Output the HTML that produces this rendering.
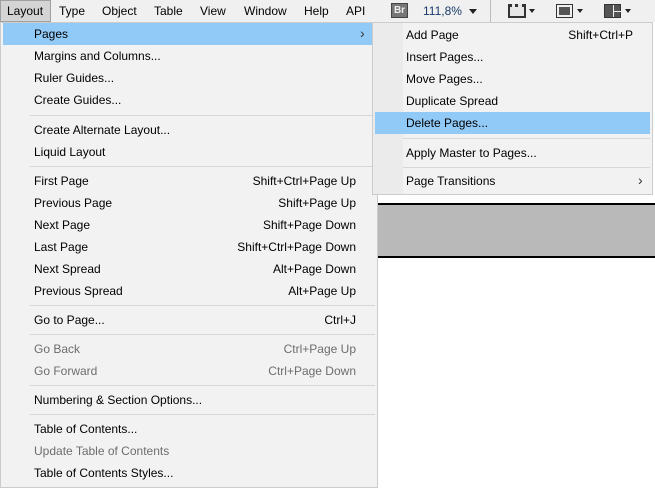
<!DOCTYPE html>
<html><head><meta charset="utf-8"><style>
*{margin:0;padding:0;box-sizing:border-box}
body{width:655px;height:490px;background:#fff;position:relative;overflow:hidden;font-family:"Liberation Sans",sans-serif;font-size:12px;color:#000}
.bar{position:absolute;left:0;top:0;width:655px;height:22px;background:#f0f0f0}
.bar span{position:absolute;top:4px}
.lay{position:absolute;left:0;top:0;width:51px;height:22px;background:#d4d4d4;border:1px solid #a0a0a0}
.band{position:absolute;left:377px;top:203px;width:278px;height:55px;background:#b9b9b9;border-top:2px solid #000;border-bottom:2px solid #000}
.menu{position:absolute;background:#f2f2f2;border:1px solid #ccc}
.it{position:absolute;left:0;right:0;height:22px;line-height:22px}
.it .l{position:absolute}
.it .r{position:absolute;text-align:right}
.dis{color:#6d6d6d}
.hl{background:#91c9f7}
.sep{position:absolute;height:1px;background:#d7d7d7}
.arr{position:absolute;font-size:14px;color:#333}
</style></head><body>
<div class="bar">
<div class="lay"></div>
<span style="left:7px">Layout</span><span style="left:59px">Type</span><span style="left:102px">Object</span><span style="left:154px">Table</span><span style="left:200px">View</span><span style="left:244px">Window</span><span style="left:304px">Help</span><span style="left:346px">API</span>
<div style="position:absolute;left:391px;top:3px;width:17px;height:15px;background:#777;border:1px solid #444;color:#eee;font-size:10px;line-height:13px;text-align:center;font-weight:bold">Br</div>
<span style="left:423px;color:#1a3a6a">111,8%</span>
<div style="position:absolute;left:469px;top:9px;border-left:4px solid transparent;border-right:4px solid transparent;border-top:5px solid #222"></div>
<div style="position:absolute;left:490px;top:0;width:1px;height:22px;background:#bbb"></div>
<div style="position:absolute;left:508px;top:4px;width:18px;height:14px;border:2px solid #333;border-top:3px dotted #333;background:#e6e6e6"></div>
<div style="position:absolute;left:529px;top:9px;border-left:3px solid transparent;border-right:3px solid transparent;border-top:4px solid #222"></div>
<div style="position:absolute;left:556px;top:4px;width:17px;height:14px;border:1px solid #333;padding:2px"><div style="width:100%;height:100%;background:#555"></div></div>
<div style="position:absolute;left:577px;top:9px;border-left:3px solid transparent;border-right:3px solid transparent;border-top:4px solid #222"></div>
<div style="position:absolute;left:604px;top:4px;width:17px;height:14px;background:#555;border:1px solid #333"><div style="position:absolute;left:8px;top:0;width:1px;height:12px;background:#eee"></div><div style="position:absolute;left:9px;top:6px;width:7px;height:1px;background:#eee"></div></div>
<div style="position:absolute;left:625px;top:9px;border-left:3px solid transparent;border-right:3px solid transparent;border-top:4px solid #222"></div>
</div>
<div class="band"></div>

<div class="menu" style="left:0;top:22px;width:378px;height:466px">
<div class="it hl" style="top:0;left:2px;right:2px"><span class="l" style="left:31px">Pages</span><span class="arr" style="left:357px;top:-1px">›</span></div>
<div class="it" style="top:22px"><span class="l" style="left:33px">Margins and Columns...</span></div>
<div class="it" style="top:44px"><span class="l" style="left:33px">Ruler Guides...</span></div>
<div class="it" style="top:66px"><span class="l" style="left:33px">Create Guides...</span></div>
<div class="sep" style="top:92px;left:29px;right:2px"></div>
<div class="it" style="top:96px"><span class="l" style="left:33px">Create Alternate Layout...</span></div>
<div class="it" style="top:118px"><span class="l" style="left:33px">Liquid Layout</span></div>
<div class="sep" style="top:143px;left:29px;right:2px"></div>
<div class="it" style="top:147px"><span class="l" style="left:33px">First Page</span><span class="r" style="right:21px">Shift+Ctrl+Page Up</span></div>
<div class="it" style="top:169px"><span class="l" style="left:33px">Previous Page</span><span class="r" style="right:21px">Shift+Page Up</span></div>
<div class="it" style="top:191px"><span class="l" style="left:33px">Next Page</span><span class="r" style="right:21px">Shift+Page Down</span></div>
<div class="it" style="top:213px"><span class="l" style="left:33px">Last Page</span><span class="r" style="right:21px">Shift+Ctrl+Page Down</span></div>
<div class="it" style="top:235px"><span class="l" style="left:33px">Next Spread</span><span class="r" style="right:21px">Alt+Page Down</span></div>
<div class="it" style="top:257px"><span class="l" style="left:33px">Previous Spread</span><span class="r" style="right:21px">Alt+Page Up</span></div>
<div class="sep" style="top:282px;left:29px;right:2px"></div>
<div class="it" style="top:286px"><span class="l" style="left:33px">Go to Page...</span><span class="r" style="right:21px">Ctrl+J</span></div>
<div class="sep" style="top:311px;left:29px;right:2px"></div>
<div class="it dis" style="top:315px"><span class="l" style="left:33px">Go Back</span><span class="r" style="right:21px">Ctrl+Page Up</span></div>
<div class="it dis" style="top:337px"><span class="l" style="left:33px">Go Forward</span><span class="r" style="right:21px">Ctrl+Page Down</span></div>
<div class="sep" style="top:362px;left:29px;right:2px"></div>
<div class="it" style="top:366px"><span class="l" style="left:33px">Numbering &amp; Section Options...</span></div>
<div class="sep" style="top:391px;left:29px;right:2px"></div>
<div class="it" style="top:395px"><span class="l" style="left:33px">Table of Contents...</span></div>
<div class="it dis" style="top:417px"><span class="l" style="left:33px">Update Table of Contents</span></div>
<div class="it" style="top:439px"><span class="l" style="left:33px">Table of Contents Styles...</span></div>
</div>

<div class="menu" style="left:372px;top:22px;width:281px;height:173px">
<div style="position:absolute;left:0;top:0;width:30px;height:171px;background:#ebebeb"></div>
<div class="it" style="top:1px"><span class="l" style="left:33px">Add Page</span><span class="r" style="right:19px">Shift+Ctrl+P</span></div>
<div class="it" style="top:23px"><span class="l" style="left:33px">Insert Pages...</span></div>
<div class="it" style="top:45px"><span class="l" style="left:33px">Move Pages...</span></div>
<div class="it" style="top:67px"><span class="l" style="left:33px">Duplicate Spread</span></div>
<div class="it hl" style="top:89px;left:2px;right:2px"><span class="l" style="left:31px">Delete Pages...</span></div>
<div class="sep" style="top:115px;left:30px;right:2px"></div>
<div class="it" style="top:119px"><span class="l" style="left:33px">Apply Master to Pages...</span></div>
<div class="sep" style="top:144px;left:30px;right:2px"></div>
<div class="it" style="top:147px"><span class="l" style="left:33px">Page Transitions</span><span class="arr" style="left:265px;top:-1px">›</span></div>
</div>
</body></html>
